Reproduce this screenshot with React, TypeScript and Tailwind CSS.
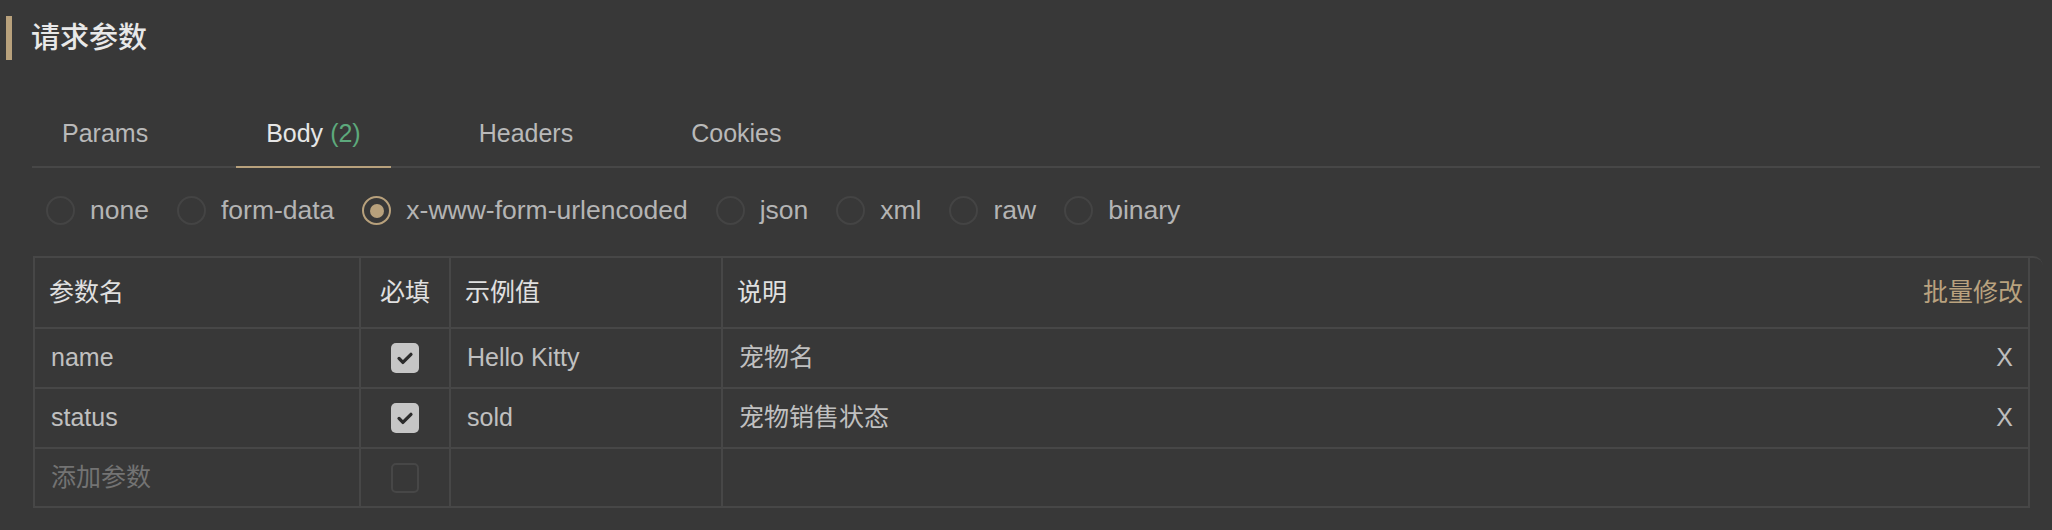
import React from 'react';

interface ParamRow {
  name: string;
  required: boolean;
  example: string;
  desc: string;
}

const tabs = [
  { label: 'Params' },
  { label: 'Body', count: 2, active: true },
  { label: 'Headers' },
  { label: 'Cookies' },
];

const bodyTypes = ['none', 'form-data', 'x-www-form-urlencoded', 'json', 'xml', 'raw', 'binary'];

const rows: ParamRow[] = [
  { name: 'name', required: true, example: 'Hello Kitty', desc: '宠物名' },
  { name: 'status', required: true, example: 'sold', desc: '宠物销售状态' },
];

function CheckBox({ checked }: { checked: boolean }) {
  if (!checked) {
    return <div className="w-[28px] h-[30px] rounded-[5px] border-2 border-[#474747]" />;
  }
  return (
    <div className="w-[28px] h-[30px] rounded-[5px] bg-[#c6c6c6] flex items-center justify-center">
      <svg viewBox="0 0 24 24" className="w-[22px] h-[22px]" fill="none">
        <path d="M5.5 12.5l4.2 4.3L18.5 8" stroke="#2b2b2b" strokeWidth="3.6" strokeLinecap="round" strokeLinejoin="round" />
      </svg>
    </div>
  );
}

export default function App() {
  return (
    <div
      className="w-full h-[530px] bg-[#383838] overflow-hidden"
      style={{ fontFamily: '"Liberation Sans", "Noto Sans CJK SC", sans-serif' }}
    >
      {/* Section title */}
      <div className="pt-[16px] flex items-center h-[60px]">
        <div className="ml-[6px] w-[6px] h-[44px] bg-[#b8a17c]" />
        <h2 className="ml-[19px] text-[29px] leading-none text-[#e8e8e8] font-medium">请求参数</h2>
      </div>

      <div className="pl-[32px] pr-[12px]">
        {/* Tabs */}
        <div className="mt-[42px] flex gap-[58px] border-b-2 border-[#474747]">
          {tabs.map((t) => (
            <div
              key={t.label}
              className={`h-[66px] -mb-[2px] px-[30px] flex items-center text-[25px] border-b-2 ${
                t.active ? 'border-[#b8a17c] text-[#e6e6e6]' : 'border-transparent text-[#b9b9b9]'
              }`}
            >
              {t.label}
              {t.count !== undefined && <span className="ml-[7px] text-[#5da97c]">({t.count})</span>}
            </div>
          ))}
        </div>

        {/* Body type radios */}
        <div className="mt-[28px] pl-[14px] flex items-center gap-[28px] h-[29px]">
          {bodyTypes.map((b) => {
            const selected = b === 'x-www-form-urlencoded';
            return (
              <div key={b} className="flex items-center gap-[15px]">
                {selected ? (
                  <div className="w-[29px] h-[29px] rounded-full border-2 border-[#b8a17c] flex items-center justify-center">
                    <div className="w-[14px] h-[14px] rounded-full bg-[#b8a17c]" />
                  </div>
                ) : (
                  <div className="w-[29px] h-[29px] rounded-full border-2 border-[#444444]" />
                )}
                <span className="text-[26.5px] text-[#b4b4b4]">{b}</span>
              </div>
            );
          })}
        </div>

        {/* Params table */}
        <div className="mt-[31px] ml-[1px] mr-[-3px] border-t-2 border-[#474747] rounded-tr-[10px]">
          <div className="mr-[13px] border-x-2 border-b-2 border-[#474747] text-[25px]">
            <div className="grid grid-cols-[326px_90px_272px_1fr] h-[69px] text-[#e0e0e0]">
              <div className="pl-[14px] flex items-center border-r-2 border-[#474747]">参数名</div>
              <div className="flex items-center justify-center border-r-2 border-[#474747]">必填</div>
              <div className="pl-[14px] flex items-center border-r-2 border-[#474747]">示例值</div>
              <div className="pl-[14px] pr-[5px] flex items-center justify-between">
                <span>说明</span>
                <span className="text-[#b9a27f]">批量修改</span>
              </div>
            </div>
            {rows.map((r) => (
              <div
                key={r.name}
                className="grid grid-cols-[326px_90px_272px_1fr] h-[60px] border-t-2 border-[#474747] text-[#c0c0c0]"
              >
                <div className="pl-[16px] flex items-center border-r-2 border-[#474747]">{r.name}</div>
                <div className="flex items-center justify-center border-r-2 border-[#474747]">
                  <CheckBox checked={r.required} />
                </div>
                <div className="pl-[16px] flex items-center border-r-2 border-[#474747]">{r.example}</div>
                <div className="pl-[16px] pr-[15px] flex items-center justify-between">
                  <span>{r.desc}</span>
                  <span className="text-[#bdbdbd]">X</span>
                </div>
              </div>
            ))}
            <div className="grid grid-cols-[326px_90px_272px_1fr] h-[59px] border-t-2 border-[#474747]">
              <div className="pl-[16px] flex items-center border-r-2 border-[#474747] text-[#737373]">添加参数</div>
              <div className="flex items-center justify-center border-r-2 border-[#474747]">
                <CheckBox checked={false} />
              </div>
              <div className="border-r-2 border-[#474747]" />
              <div />
            </div>
          </div>
        </div>
      </div>
    </div>
  );
}
